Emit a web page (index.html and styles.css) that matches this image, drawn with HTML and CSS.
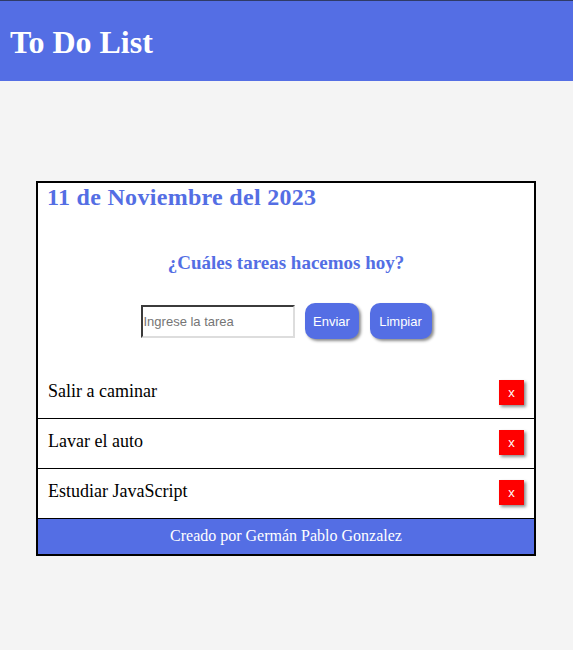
FILE: index.html
```html
<!DOCTYPE html>
<html lang="es">
<head>
<meta charset="utf-8">
<title>To Do List</title>
<link rel="stylesheet" href="styles.css">
</head>
<body>
<header class="top">
  <h1 class="title">To Do List</h1>
</header>
<main class="card">
  <h2 class="date">11 de Noviembre del 2023</h2>
  <h3 class="question">¿Cuáles tareas hacemos hoy?</h3>
  <form class="form">
    <input class="task-input" type="text" placeholder="Ingrese la tarea">
    <button class="btn btn-send" type="button">Enviar</button>
    <button class="btn btn-clear" type="button">Limpiar</button>
  </form>
  <ul class="list">
    <li class="item"><span class="item-text">Salir a caminar</span><button class="del" type="button">x</button></li>
    <li class="item"><span class="item-text">Lavar el auto</span><button class="del" type="button">x</button></li>
    <li class="item"><span class="item-text">Estudiar JavaScript</span><button class="del" type="button">x</button></li>
  </ul>
  <footer class="foot">Creado por Germán Pablo Gonzalez</footer>
</main>
</body>
</html>
```
FILE: styles.css
```css
html, body {
  margin: 0;
  padding: 0;
}
body {
  background: #f4f4f4;
  font-family: "Liberation Serif", "Times New Roman", serif;
  height: 650px;
}
.top {
  background: #546ee4;
  border-top: 1px solid #2f3b66;
  height: 80px;
  display: flex;
  align-items: center;
  padding: 0 10px;
}
.title {
  margin: 0;
  color: #fff;
  font-size: 32px;
  font-weight: bold;
  line-height: 1;
  position: relative;
  top: 1px;
}
.card {
  width: 496px;
  margin: 100px 0 0 36px;
  border: 2px solid #000;
  background: #fff;
}
.date {
  margin: 0;
  padding: 0 9px;
  font-size: 24px;
  line-height: 28px;
  letter-spacing: 0.3px;
  color: #546ee4;
  font-weight: bold;
}
.question {
  margin: 40px 0 0;
  text-align: center;
  font-size: 19px;
  line-height: 24px;
  color: #546ee4;
  font-weight: bold;
}
.form {
  margin: 28px 0 0;
  display: flex;
  justify-content: center;
  align-items: center;
  gap: 10px;
}
.task-input {
  box-sizing: border-box;
  width: 154px;
  height: 33px;
  padding: 0 1px;
  border: 2px inset #ddd;
  border-top-color: #8f8f8f;
  border-left-color: #8f8f8f;
  font-family: "Liberation Sans", Arial, sans-serif;
  font-size: 13px;
  color: #333;
}
.task-input::placeholder {
  color: #757575;
}
.btn {
  height: 36px;
  padding: 0;
  border: none;
  border-radius: 10px;
  background: #546ee4;
  color: #fff;
  font-family: "Liberation Sans", Arial, sans-serif;
  font-size: 13px;
  box-shadow: 2px 2px 3px rgba(0,0,0,0.45);
}
.btn-send {
  width: 54px;
}
.btn-clear {
  width: 62px;
  margin-left: 1px;
}
.list {
  list-style: none;
  margin: 30px 0 0;
  padding: 0;
}
.item {
  height: 49px;
  border-bottom: 1px solid #000;
  display: flex;
  align-items: center;
  justify-content: space-between;
  padding: 0 10px;
}
.item-text {
  font-size: 18px;
  color: #000;
  position: relative;
  top: -2px;
}
.del {
  width: 25px;
  height: 25px;
  padding: 0;
  border: none;
  background: #ff0000;
  color: #fff;
  font-family: "Liberation Sans", Arial, sans-serif;
  font-size: 13px;
  box-shadow: 2px 2px 3px rgba(0,0,0,0.45);
  position: relative;
  top: -1px;
}
.foot {
  background: #546ee4;
  color: #fff;
  text-align: center;
  font-size: 16px;
  height: 35px;
  line-height: 33px;
}
```
